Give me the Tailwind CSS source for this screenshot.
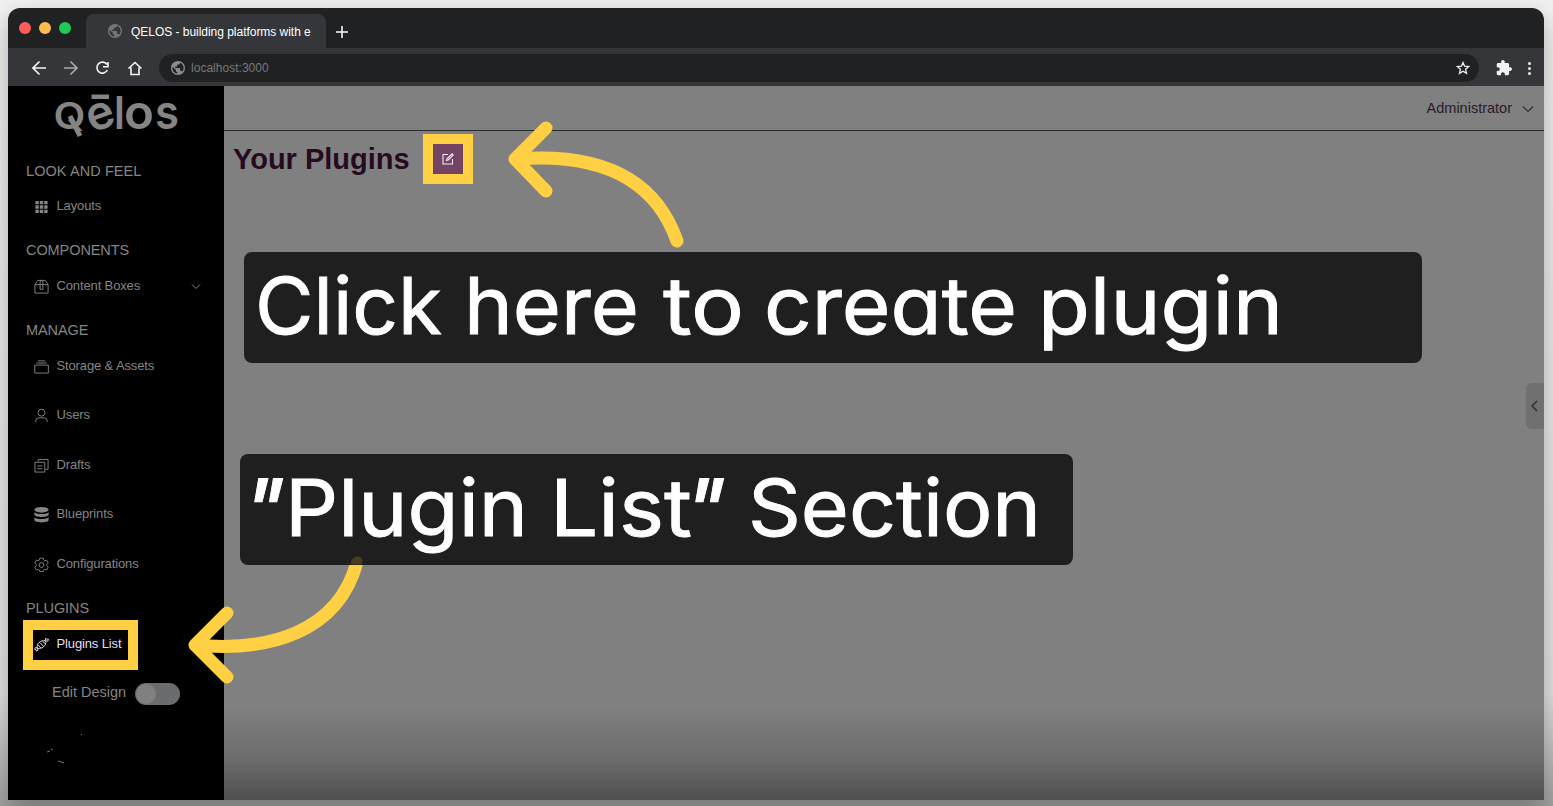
<!DOCTYPE html>
<html lang="en"><head><meta charset="utf-8"><title>QELOS</title>
<script src="https://cdn.jsdelivr.net/npm/@tailwindcss/browser@4"></script></head>
<body class="relative h-[806px] w-[1553px] overflow-hidden bg-linear-to-b from-[#f0f0f0] via-[#e2e2e2] via-[86%] to-[#a0a0a0] pt-2 pl-2 font-['Liberation_Sans',sans-serif]">
<div class="flex h-[792px] w-[1536px] flex-col rounded-t-xl shadow-[0_10px_24px_rgba(0,0,0,0.28)]">
  <header class="flex h-10 rounded-t-xl bg-[#202123]">
    <div class="flex w-[78px] gap-2 pt-[14px] pl-[11px]">
      <span class="size-3 rounded-full bg-[#ff5d5b]"></span><span class="size-3 rounded-full bg-[#ffbb4f]"></span><span class="size-3 rounded-full bg-[#1fcb56]"></span>
    </div>
    <div class="mt-1.5 flex h-[34px] w-[240px] items-center rounded-t-lg bg-[#35363a] pl-[22px] text-white">
      <svg class="size-[14px] shrink-0" viewBox="2 2 20 20" fill="#737477"><path d="M12 2C6.480 2 2 6.480 2 12s4.480 10 10 10 10-4.480 10-10S17.520 2 12 2zm-1 17.930c-3.950-.49-7-3.850-7-7.930 0-.62.08-1.210.21-1.790L9 15v1c0 1.100.9 2 2 2v1.930zm6.900-2.540c-.26-.81-1-1.390-1.900-1.390h-1v-3c0-.55-.45-1-1-1H8v-2h2c.55 0 1-.45 1-1V7h2c1.100 0 2-.9 2-2v-.41c2.930 1.190 5 4.060 5 7.410 0 2.080-.8 3.970-2.100 5.390z"/></svg>
      <span class="mt-[2px] ml-[9px] text-[12px] tracking-[-0.03px] whitespace-nowrap">QELOS - building platforms with e</span>
    </div>
    <svg class="mt-[18px] ml-[10px] size-3" viewBox="0 0 12 12" stroke="#fff" stroke-width="1.500"><path d="M6 0v12M0 6h12"/></svg>
  </header>
  <nav class="flex h-[38px] items-center bg-[#35363a] pt-[2px] pl-6">
    <svg class="h-5 w-[120px] shrink-0" viewBox="0 0 120 20" fill="none" stroke="#f5f5f5" stroke-width="1.600"><path d="M14 10H1M7.500 3.500L1 10l6.500 6.500"/><path stroke="#aaabad" d="M32 10h13M38.500 3.500L45 10l-6.500 6.500"/><path d="M75 6.500A5.500 5.500 0 1 0 75.400 12M76 4v4.800h-5"/><path d="M96.500 10.500l6.500-6 6.500 6M99 9.500v7h8v-7"/></svg>
    <div class="ml-[7px] flex h-7 w-[1320px] items-center rounded-full bg-[#202123] px-3">
      <svg class="size-[14px]" viewBox="2 2 20 20" fill="#8b8c8e"><path d="M12 2C6.480 2 2 6.480 2 12s4.480 10 10 10 10-4.480 10-10S17.520 2 12 2zm-1 17.930c-3.950-.49-7-3.850-7-7.930 0-.62.08-1.210.21-1.790L9 15v1c0 1.100.9 2 2 2v1.930zm6.900-2.540c-.26-.81-1-1.390-1.900-1.390h-1v-3c0-.55-.45-1-1-1H8v-2h2c.55 0 1-.45 1-1V7h2c1.100 0 2-.9 2-2v-.41c2.930 1.190 5 4.060 5 7.410 0 2.080-.8 3.970-2.100 5.390z"/></svg>
      <span class="ml-[6px] text-[12px] tracking-[0.02px] text-[#77787b]">localhost:3000</span>
      <svg class="mr-[-3px] ml-auto size-[14px]" viewBox="0 0 14 14" fill="none" stroke="#eee" stroke-width="1.300"><path d="M7 1.500l1.600 3.700 4 .4-3 2.700.9 4L7 10.200l-3.500 2.100.9-4-3-2.700 4-.4z"/></svg>
    </div>
    <svg class="ml-[17px] size-4" viewBox="1 1 22 22" fill="#f1f2f5"><path d="M20.500 11H19V7c0-1.100-.9-2-2-2h-4V3.500a2.500 2.500 0 0 0-5 0V5H4c-1.100 0-2 .9-2 2v3.800h1.500a2.700 2.700 0 0 1 0 5.400H2V20c0 1.100.9 2 2 2h3.800v-1.500a2.700 2.700 0 0 1 5.400 0V22H17c1.100 0 2-.9 2-2v-4h1.500a2.500 2.500 0 0 0 0-5z"/></svg>
    <span class="ml-[15px] flex w-1 flex-col items-center gap-[2px]"><i class="size-[3px] rounded-full bg-[#f1f2f5]"></i><i class="size-[3px] rounded-full bg-[#f1f2f5]"></i><i class="size-[3px] rounded-full bg-[#f1f2f5]"></i></span>
  </nav>
  <div class="flex min-h-0 flex-1">
    <aside class="flex w-[216px] flex-col bg-black text-[13px] tracking-[-0.13px] text-[#858585]">
      <svg class="h-[60px] w-full shrink-0 overflow-visible font-['Inter',sans-serif] font-semibold tracking-normal" viewBox="8 86 216 60" fill="#858585">
        <text x="53.500" y="129" font-size="37" textLength="32" lengthAdjust="spacingAndGlyphs">Q</text><path d="M70 116l10 20" stroke="#858585" stroke-width="5"/>
        <text font-size="47" transform="translate(100.500 116) rotate(-20)" x="-14" y="13">e</text><path d="M91.500 94.500h17.500v4.500H91.500z"/>
        <text transform="translate(114 129) scale(.85 .93)" font-size="49">l</text><text x="124" y="129" font-size="48" textLength="30" lengthAdjust="spacingAndGlyphs">o</text><text x="155" y="129" font-size="48" textLength="24" lengthAdjust="spacingAndGlyphs">s</text>
      </svg>
      <h3 class="mt-[17px] ml-[18px] h-4 text-[14.500px] leading-4 tracking-[0.08px]">LOOK AND FEEL</h3>
      <div class="mt-[19px] flex h-4 items-center pl-[26px]"><svg class="mr-[7.500px] size-[15px]" viewBox="0 0 16 16" fill="currentColor"><path d="M1.500 2h3.600v3.600H1.500zM6.200 2h3.600v3.600H6.200zM10.900 2h3.600v3.600h-3.600zM1.500 6.700h3.600v3.600H1.500zM6.200 6.700h3.600v3.600H6.200zM10.900 6.700h3.600v3.600h-3.600zM1.500 11.400h3.600V15H1.500zM6.200 11.400h3.600V15H6.200zM10.900 11.400h3.600V15h-3.600z"/></svg>Layouts</div>
      <h3 class="mt-[28px] ml-[18px] h-4 text-[14.500px] leading-4 tracking-[-0.08px]">COMPONENTS</h3>
      <div class="mt-[20px] flex h-4 items-center pl-[26px]"><svg class="mr-[7.500px] size-[15px]" viewBox="0 0 16 16" fill="none" stroke="currentColor"><path d="M1 6v9h14V6zM1 6l3-4.500h8L15 6M6.500 6V4q0-2.500 1.500-2.500T9.500 4v7h-3V6"/></svg>Content Boxes<svg class="mr-[23px] ml-auto size-[10px]" viewBox="0 0 10 10" fill="none" stroke="currentColor"><path d="M1 3.500l4 4 4-4"/></svg></div>
      <h3 class="mt-[28px] ml-[18px] h-4 text-[14.500px] leading-4 tracking-[-0.1px]">MANAGE</h3>
      <div class="mt-[20px] flex h-4 items-center pl-[26px]"><svg class="mr-[7.500px] size-[15px]" viewBox="0 0 16 16" fill="none" stroke="currentColor"><path d="M.8 6.500h14.500v8.500H.8zM2.500 4.300h11M4 2h8"/></svg>Storage &amp; Assets</div>
      <div class="mt-[33px] flex h-4 items-center pl-[26px]"><svg class="mr-[7.500px] size-[15px]" viewBox="0 0 16 16" fill="none" stroke="currentColor"><circle cx="8" cy="5" r="3.700"/><path d="M2 15v-1.500a3 3 0 0 1 3-3h6a3 3 0 0 1 3 3V15"/></svg>Users</div>
      <div class="mt-[34px] flex h-4 items-center pl-[26px]"><svg class="mr-[7.500px] size-[15px]" viewBox="0 0 16 16" fill="none" stroke="currentColor"><path d="M1 4.500h10.500V15H1zM4.500 4V1.500H15V12h-3M3.500 8.500h5.500M3.500 11.500h5.500"/></svg>Drafts</div>
      <div class="mt-[33px] flex h-4 items-center pl-[26px]"><svg class="mr-[7.500px] size-[15px] overflow-visible" viewBox="0 0 16 16" fill="currentColor"><ellipse cx="8" cy="3" rx="7.600" ry="3"/><path d="M.4 5.200c1 3 14.200 3 15.200 0v3c-1 3.200-14.200 3.200-15.200 0zM.4 10.600c1 3 14.200 3 15.200 0v3.600c-1 3-14.200 3-15.200 0z"/></svg>Blueprints</div>
      <div class="mt-[34px] flex h-4 items-center pl-[26px]"><svg class="mr-[7.500px] size-[15px]" viewBox="0 0 16 16" fill="none" stroke="currentColor" stroke-linejoin="round"><path d="M6.200 1.300h3.600l.5 2 1.200.7 2-.6 1.700 3-1.500 1.500v1.400l1.500 1.500-1.700 3-2-.6-1.200.7-.5 1.800H6.200l-.5-1.800-1.200-.7-2 .6-1.700-3 1.500-1.500V7.900L.8 6.400l1.700-3 2 .6 1.200-.7z"/><circle cx="8" cy="8.500" r="2.600"/></svg>Configurations</div>
      <h3 class="mt-[28px] ml-[18px] h-4 text-[14.500px] leading-4 tracking-[-0.1px]">PLUGINS</h3>
      <div class="mt-[4px] ml-[15px] flex h-[50px] w-[115px] items-center border-10 border-[#ffd043] pb-[2px] pl-[1px] whitespace-nowrap text-[#e9dcf2]"><svg class="mt-[1px] mr-[7.500px] size-[15px] shrink-0" viewBox="0 0 16 16" fill="none" stroke="currentColor"><path d="M3.500 12C2.500 7 7 3 12.500 4c1 5-3.500 9-9 8zM4.500 8.500l3 3.500M6.500 6l4 4.500M9 4.500l3.500 3M12 4l.5-2.800 1.200 1.300 1.600-.3-.3 2-2.500.3M4 12l-2.500-.8-.8 1.800 1.600.5.300 1.500 1.700-.7z"/></svg>Plugins List</div>
      <div class="mt-[12px] flex h-6 items-center pl-11 text-[14.500px] tracking-normal"><span class="mt-[-2px]">Edit Design</span><span class="ml-[9px] h-[22px] w-[45px] rounded-full bg-[#6b6c70] p-px"><i class="block size-5 rounded-full bg-[#808080]"></i></span></div>
      <svg class="mt-[26px] ml-9 h-9 w-12" viewBox="0 0 48 36" fill="none" stroke="#777"><path d="M3 20l3-1M7 18l2-1M14 29l6 2M37 2l1 1"/></svg>
    </aside>
    <main class="flex flex-1 flex-col bg-linear-to-b from-[#808080] from-[87%] via-[#6d6d6d] via-[94%] to-[#505050]">
      <div class="flex h-[45px] items-center justify-end border-b border-[#242b2e] pr-[10px] text-[14.500px] text-[#2b1a27]"><span class="mt-[2px]">Administrator</span><svg class="mt-[2px] ml-[10px] size-3" viewBox="0 0 12 12" fill="none" stroke="#332b31" stroke-width="1.200"><path d="M1 3.500l5 5 5-5"/></svg></div>
      <div class="flex pl-[9px]">
        <h1 class="mt-[12px] w-[190px] text-[29px] leading-8 font-bold whitespace-nowrap text-[#260b20]">Your Plugins</h1>
        <button class="mt-[3px] flex size-[50px] items-center justify-center border-10 border-[#ffd043] bg-[#744464]"><svg class="size-3" viewBox="0 0 12 12" fill="none" stroke="#f4e9f2" stroke-width="1.100"><path d="M6 1.500H1v9.500h9.500V6M4.500 7.500L5 5.800 10 .8l1.200 1.200-5 5z"/></svg></button>
      </div>
      <div class="mt-[199px] ml-auto flex h-[46px] w-[18px] items-center justify-center rounded-l-md bg-[#707070] pr-[2px]"><svg class="h-3 w-2" viewBox="0 0 8 12" fill="none" stroke="#2c252b" stroke-width="1.200"><path d="M7 1L2 6l5 5"/></svg></div>
    </main>
  </div>
</div>
<svg class="absolute inset-0 h-[806px] w-[1553px]" viewBox="0 0 1553 806" fill="none" stroke="#ffd043" stroke-width="13" stroke-linecap="round" stroke-linejoin="round"><path d="M546 128l-31 31 31 32M515 159C590 153 653 172 677 241"/><path d="M227 613l-32 32 32 32M195 645C268 652 338 633 357 562"/></svg>
<div class="absolute top-[252px] left-[244px] h-[111px] w-[1178px] rounded-lg bg-[#1f1f1f]"></div>
<div class="absolute top-[454px] left-[240px] h-[111px] w-[833px] rounded-lg bg-[#1f1f1f]"></div>
<svg class="absolute inset-0 h-[806px] w-[1553px] font-['Inter',sans-serif] font-normal [font-feature-settings:'cv11']" viewBox="0 0 1553 806" fill="#fff" font-size="79" stroke="#fff" stroke-width=".9">
  <path d="M350.500 564.500l1-4q2-4 6-4t5 4l-1 4z" fill="#4b3d18" stroke="none"/>
  <text x="255" y="334" textLength="187" lengthAdjust="spacingAndGlyphs">Click</text><text x="464" y="334" textLength="175" lengthAdjust="spacingAndGlyphs">here</text><text x="663" y="334" textLength="81" lengthAdjust="spacingAndGlyphs">to</text><text x="764" y="334" textLength="253" lengthAdjust="spacingAndGlyphs">create</text><text x="1038" y="334" textLength="245" lengthAdjust="spacingAndGlyphs">plugin</text>
  <text transform="translate(239 536) skewX(-12)" font-weight="600" textLength="39" lengthAdjust="spacingAndGlyphs">"</text><text x="285" y="536" textLength="243" lengthAdjust="spacingAndGlyphs">Plugin</text><text x="550" y="536" textLength="142" lengthAdjust="spacingAndGlyphs">List</text><text transform="translate(680 536) skewX(-12)" font-weight="600" textLength="39" lengthAdjust="spacingAndGlyphs">"</text><text x="748" y="536" textLength="293" lengthAdjust="spacingAndGlyphs">Section</text>
</svg>
</body></html>
